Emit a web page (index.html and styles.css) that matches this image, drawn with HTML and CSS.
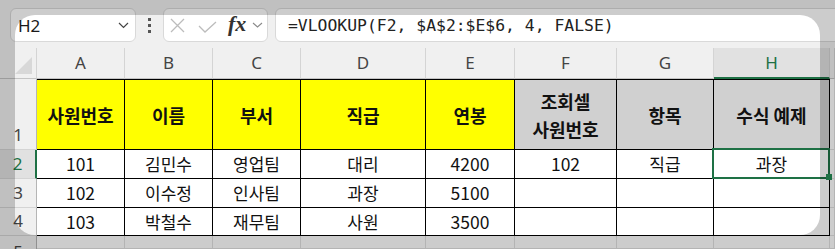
FILE: index.html
```html
<!DOCTYPE html>
<html>
<head>
  <title>VLOOKUP 예제</title>
  <link rel="stylesheet" href="styles.css">
</head>
<body>
  <div class="formula-bar">
    <div class="name-box">
      <span class="cell-ref">H2</span>
      <svg class="chev" width="11" height="7" viewBox="0 0 11 7"><path d="M1 1l4.5 4.5L10 1" fill="none" stroke="#444" stroke-width="1.2"/></svg>
    </div>
    <div class="dots"><i></i><i></i><i></i></div>
    <div class="func-box">
      <svg class="icon-x" width="15" height="15" viewBox="0 0 15 15"><path d="M1 1l13 13M14 1L1 14" stroke="#bcbcbc" stroke-width="1.3"/></svg>
      <svg class="icon-ok" width="19" height="12" viewBox="0 0 19 12"><path d="M1 5l6 6L18 1" fill="none" stroke="#bcbcbc" stroke-width="1.3"/></svg>
      <span class="fx">fx</span>
      <svg class="chev-sm" width="11" height="6" viewBox="0 0 11 6"><path d="M1 1l4.5 4L10 1" fill="none" stroke="#8a8a8a" stroke-width="1.1"/></svg>
    </div>
    <div class="formula">=VLOOKUP(F2, $A$2:$E$6, 4, FALSE)</div>
  </div>

  <div class="sheet">
    <!-- column headers -->
    <div class="cell corner"><svg width="36" height="30" viewBox="0 0 36 30"><polygon points="32,9 32,26 15,26" fill="#d8d8d8"/></svg></div>
    <div class="cell col-head">A</div>
    <div class="cell col-head">B</div>
    <div class="cell col-head">C</div>
    <div class="cell col-head">D</div>
    <div class="cell col-head">E</div>
    <div class="cell col-head">F</div>
    <div class="cell col-head">G</div>
    <div class="cell col-head active-col">H</div>
    <div class="cell col-head"></div>

    <!-- row 1 -->
    <div class="cell row-head">1</div>
    <div class="cell data top yellow">사원번호</div>
    <div class="cell data top yellow">이름</div>
    <div class="cell data top yellow">부서</div>
    <div class="cell data top yellow">직급</div>
    <div class="cell data top yellow">연봉</div>
    <div class="cell data top gray two-line">조회셀<br>사원번호</div>
    <div class="cell data top gray">항목</div>
    <div class="cell data top gray">수식 예제</div>
    <div class="cell"></div>

    <!-- row 2 -->
    <div class="cell row-head active-row">2</div>
    <div class="cell data num">101</div>
    <div class="cell data">김민수</div>
    <div class="cell data">영업팀</div>
    <div class="cell data">대리</div>
    <div class="cell data num">4200</div>
    <div class="cell data num">102</div>
    <div class="cell data">직급</div>
    <div class="cell data selected">과장</div>
    <div class="cell"></div>

    <!-- row 3 -->
    <div class="cell row-head">3</div>
    <div class="cell data num">102</div>
    <div class="cell data">이수정</div>
    <div class="cell data">인사팀</div>
    <div class="cell data">과장</div>
    <div class="cell data num">5100</div>
    <div class="cell data"></div>
    <div class="cell data"></div>
    <div class="cell data"></div>
    <div class="cell"></div>

    <!-- row 4 -->
    <div class="cell row-head">4</div>
    <div class="cell data num">103</div>
    <div class="cell data">박철수</div>
    <div class="cell data">재무팀</div>
    <div class="cell data">사원</div>
    <div class="cell data num">3500</div>
    <div class="cell data"></div>
    <div class="cell data"></div>
    <div class="cell data"></div>
    <div class="cell"></div>

    <!-- row 5 -->
    <div class="cell row-head last">5</div>
    <div class="cell"></div>
    <div class="cell"></div>
    <div class="cell"></div>
    <div class="cell"></div>
    <div class="cell"></div>
    <div class="cell"></div>
    <div class="cell"></div>
    <div class="cell"></div>
    <div class="cell"></div>
  </div>

  <div class="frame"></div>
</body>
</html>
```

FILE: styles.css
```css
body {
  margin: 0;
  width: 835px;
  height: 249px;
  overflow: hidden;
  position: relative;
  background-color: #f0f0f0;
  font-family: "Noto Sans", sans-serif;
}

.formula-bar {
  display: flex;
  align-items: flex-start;
  height: 48px;
  padding: 8px 0 0 10px;
  box-sizing: border-box;
}

.name-box,
.func-box,
.formula {
  height: 34px;
  box-sizing: border-box;
  background-color: #fff;
  border: 1px solid #d9d9d9;
  border-radius: 6px;
  display: flex;
  align-items: center;
}

.name-box {
  width: 126px;
  padding: 0 6px 0 7px;
  justify-content: space-between;
}

.cell-ref {
  font-size: 17px;
  color: #1a1a1a;
}

.dots {
  width: 27px;
  display: flex;
  flex-direction: column;
  align-items: center;
  gap: 3px;
  padding-top: 10px;
}

.dots i {
  width: 3px;
  height: 3px;
  background-color: #555;
}

.func-box {
  width: 105px;
  padding-left: 6px;
}

.icon-ok {
  margin-left: 13px;
  margin-top: 3px;
}

.fx {
  margin-left: 11px;
  font: italic bold 22px "Liberation Serif", serif;
  color: #333;
  line-height: 1;
  margin-top: -2px;
}

.chev-sm {
  margin-left: 6px;
}

.formula {
  flex: 1;
  margin-left: 7px;
  margin-right: -20px;
  padding-left: 12px;
  font: 16.4px "DejaVu Sans Mono", monospace;
  color: #222;
}

.sheet {
  display: grid;
  grid-template-columns: 37px 88px 88px 88px 125px 89px 102px 97px 116px 1fr;
  grid-template-rows: 31px 71px 29px 29px 28px 13px;
  height: 201px;
  overflow: hidden;
  background-color: #fff;
}

.cell {
  box-sizing: border-box;
  min-height: 0;
  overflow: hidden;
  border-right: 1px solid #e1e1e1;
  border-bottom: 1px solid #e1e1e1;
  display: flex;
  align-items: center;
  justify-content: center;
  font: 17px "Noto Sans CJK KR", sans-serif;
  line-height: 20px;
  color: #111;
}

.num {
  font-size: 17.5px;
}

.corner {
  background-color: #f0f0f0;
  border-right-color: #d4d4d4;
  border-bottom-color: #c4c4c4;
  align-items: flex-start;
  justify-content: flex-start;
}

.col-head {
  background-color: #f0f0f0;
  border-right-color: #d4d4d4;
  border-bottom-color: #c4c4c4;
  font-family: "Noto Sans", sans-serif;
  color: #444;
}

.row-head {
  background-color: #f0f0f0;
  border-right-color: #b5b5b5;
  border-bottom-color: #d4d4d4;
  align-items: flex-end;
  padding-bottom: 4px;
  font-family: "Noto Sans", sans-serif;
  color: #444;
}

.row-head.last {
  align-items: flex-start;
  padding: 6px 0 0;
  border-bottom: none;
}

.active-col {
  background-color: #e1e1e1;
  color: #1e7145;
  border-bottom: 2px solid #1e7145;
}

.active-row {
  background-color: #e1e1e1;
  color: #1e7145;
  border-right: 2px solid #1e7145;
}

.data {
  border-right-color: #000;
  border-bottom-color: #000;
}

.top {
  border-top: 1px solid #000;
}

.yellow,
.gray {
  font-weight: 700;
  font-size: 18px;
}

.yellow {
  background-color: #ffff00;
}

.gray {
  background-color: #d0d0d0;
}

.two-line {
  text-align: center;
  line-height: 28px;
}

.selected {
  position: relative;
  overflow: visible;
}

.selected::after {
  content: "";
  position: absolute;
  left: -2px;
  top: -2px;
  right: -1px;
  bottom: -1px;
  border: 2px solid #1e7145;
}

.selected::before {
  content: "";
  position: absolute;
  right: -3px;
  bottom: -2px;
  width: 6px;
  height: 6px;
  background-color: #1e7145;
  z-index: 1;
}

.frame {
  position: absolute;
  left: 15px;
  top: 15px;
  right: 15px;
  bottom: 14px;
  border-radius: 20px;
  box-shadow: 0 0 0 600px rgba(0, 0, 0, 0.2);
  pointer-events: none;
}
```
